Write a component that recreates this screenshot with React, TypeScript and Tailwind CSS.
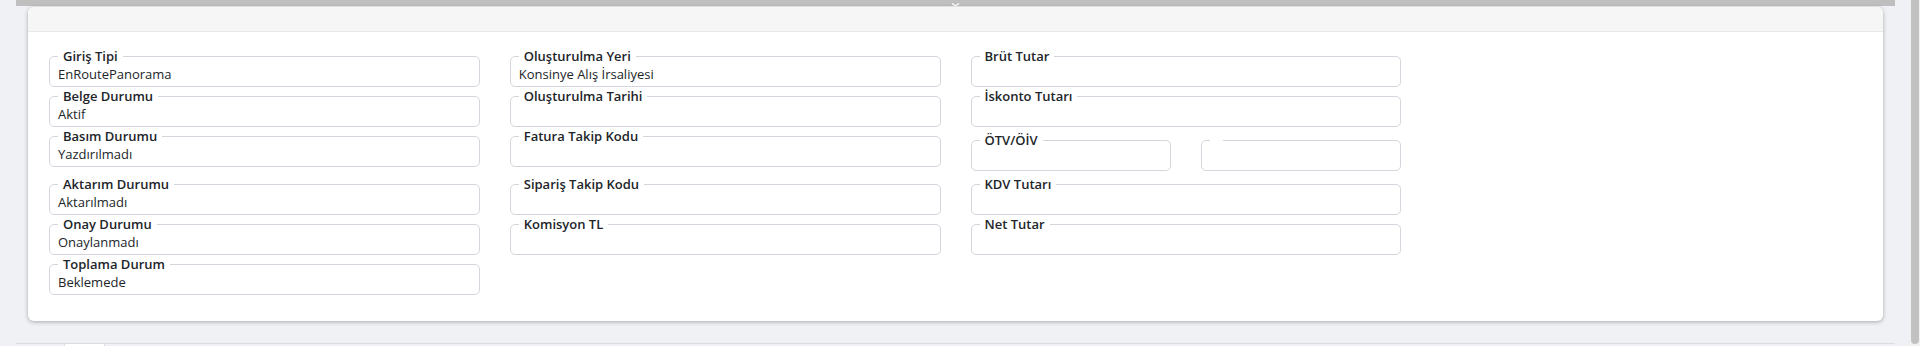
import type { ReactNode } from 'react';

type Field = { label: string; value?: string };

function Box({ label, value }: Field) {
  return (
    <fieldset className="h-[39px] rounded-[5px] border border-[#d3d6dc] px-[8px] pb-[3px]">
      <legend className="px-[5px] text-[13px] leading-4 font-semibold text-[#212529]">
        {label || '\u00a0'}
      </legend>
      <div className="h-[19px] truncate pt-[2px] text-[13px] leading-4 text-[#212529]">{value}</div>
    </fieldset>
  );
}

const col1: Field[] = [
  { label: 'Giriş Tipi', value: 'EnRoutePanorama' },
  { label: 'Belge Durumu', value: 'Aktif' },
  { label: 'Basım Durumu', value: 'Yazdırılmadı' },
  { label: 'Aktarım Durumu', value: 'Aktarılmadı' },
  { label: 'Onay Durumu', value: 'Onaylanmadı' },
  { label: 'Toplama Durum', value: 'Beklemede' },
];

const col2: Field[] = [
  { label: 'Oluşturulma Yeri', value: 'Konsinye Alış İrsaliyesi' },
  { label: 'Oluşturulma Tarihi' },
  { label: 'Fatura Takip Kodu' },
  { label: 'Sipariş Takip Kodu' },
  { label: 'Komisyon TL' },
];

const col3: Field[] = [
  { label: 'Brüt Tutar' },
  { label: 'İskonto Tutarı' },
  { label: 'ÖTV/ÖİV' },
  { label: 'KDV Tutarı' },
  { label: 'Net Tutar' },
];

function Cell({ children, tall, shifted }: { children?: ReactNode; tall?: boolean; shifted?: boolean }) {
  return <div className={`${tall ? 'h-[47px]' : ''} ${shifted ? 'pt-[4px]' : ''}`}>{children}</div>;
}

export default function App() {
  const rows = col1.map((_, i) => i);

  return (
    <div className="flex h-[346px] w-[1920px] overflow-hidden bg-[#f0f1f5] font-['Open_Sans',sans-serif]">
      <div className="flex flex-1 flex-col pl-[16px] pr-[15px]">
        {/* collapsed toolbar above the card */}
        <div className="flex h-[6px] items-end justify-center bg-[#bfbfbf]">
          <svg width="9" height="4" viewBox="0 0 9 4" className="mb-[-1px]">
            <path d="M1 0.5 L4.5 3 L8 0.5" fill="none" stroke="#ffffff" strokeWidth="1.4" />
          </svg>
        </div>

        <div className="mx-[12px] mt-[1px] rounded-[6px] bg-white shadow-[0_1px_4px_rgba(0,0,0,0.3)]">
          <div className="h-[25px] rounded-t-[6px] border-b border-[#e8e8e8] bg-[#f6f6f6]" />

          <div className="grid grid-cols-4 gap-x-[30px] gap-y-[1px] px-[21px] pt-[16px] pb-[26px]">
            {rows.map((i) => (
              <div key={i} className="contents">
                <Cell tall={i === 2}>
                  <Box {...col1[i]} />
                </Cell>
                <Cell tall={i === 2}>{col2[i] && <Box {...col2[i]} />}</Cell>
                <Cell tall={i === 2} shifted={i === 2}>
                  {i === 2 ? (
                    <div className="grid grid-cols-2 gap-x-[30px]">
                      <Box {...col3[i]} />
                      <Box label="" />
                    </div>
                  ) : (
                    col3[i] && <Box {...col3[i]} />
                  )}
                </Cell>
                <div />
              </div>
            ))}
          </div>
        </div>

        <div className="mt-auto flex h-[3px] border-t border-[#d9dce4]">
          <div className="w-[48px]" />
          <div className="w-[41px] border-x border-[#d9dce4] bg-white" />
        </div>
      </div>

      {/* scrollbar */}
      <div className="w-[10px] bg-[#f1f1f1]">
        <div className="mx-[1px] h-[344px] rounded-b-[4px] bg-[#c1c1c1]" />
      </div>
    </div>
  );
}
